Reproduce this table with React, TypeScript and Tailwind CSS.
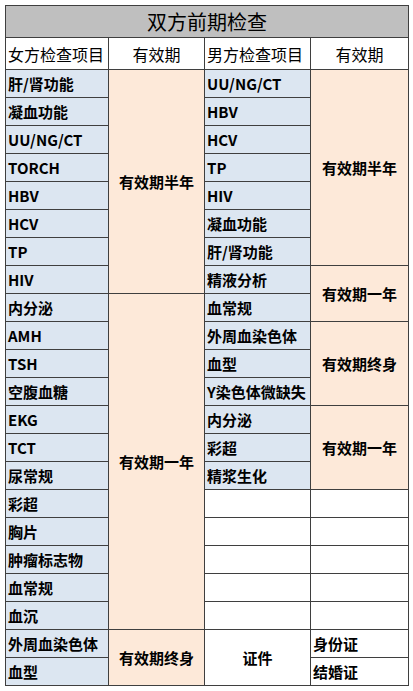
import React from 'react';

const BLUE = 'bg-[#dce6f1]';
const PEACH = 'bg-[#fde9d9]';

type Cell = { text?: string; span?: number; tone: 'blue' | 'peach' | 'white'; center?: boolean };

// 22 data rows: [女方项目, 女方有效期?, 男方项目?, 男方有效期?]
const rows: (Cell | null)[][] = [
    [{ text: '肝/肾功能', tone: 'blue' }, { text: '有效期半年', span: 8, tone: 'peach', center: true }, { text: 'UU/NG/CT', tone: 'blue' }, { text: '有效期半年', span: 7, tone: 'peach', center: true }],
    [{ text: '凝血功能', tone: 'blue' }, null, { text: 'HBV', tone: 'blue' }, null],
    [{ text: 'UU/NG/CT', tone: 'blue' }, null, { text: 'HCV', tone: 'blue' }, null],
    [{ text: 'TORCH', tone: 'blue' }, null, { text: 'TP', tone: 'blue' }, null],
    [{ text: 'HBV', tone: 'blue' }, null, { text: 'HIV', tone: 'blue' }, null],
    [{ text: 'HCV', tone: 'blue' }, null, { text: '凝血功能', tone: 'blue' }, null],
    [{ text: 'TP', tone: 'blue' }, null, { text: '肝/肾功能', tone: 'blue' }, null],
    [{ text: 'HIV', tone: 'blue' }, null, { text: '精液分析', tone: 'blue' }, { text: '有效期一年', span: 2, tone: 'peach', center: true }],
    [{ text: '内分泌', tone: 'blue' }, { text: '有效期一年', span: 12, tone: 'peach', center: true }, { text: '血常规', tone: 'blue' }, null],
    [{ text: 'AMH', tone: 'blue' }, null, { text: '外周血染色体', tone: 'blue' }, { text: '有效期终身', span: 3, tone: 'peach', center: true }],
    [{ text: 'TSH', tone: 'blue' }, null, { text: '血型', tone: 'blue' }, null],
    [{ text: '空腹血糖', tone: 'blue' }, null, { text: 'Y染色体微缺失', tone: 'blue' }, null],
    [{ text: 'EKG', tone: 'blue' }, null, { text: '内分泌', tone: 'blue' }, { text: '有效期一年', span: 3, tone: 'peach', center: true }],
    [{ text: 'TCT', tone: 'blue' }, null, { text: '彩超', tone: 'blue' }, null],
    [{ text: '尿常规', tone: 'blue' }, null, { text: '精浆生化', tone: 'blue' }, null],
    [{ text: '彩超', tone: 'blue' }, null, { tone: 'white' }, { tone: 'white' }],
    [{ text: '胸片', tone: 'blue' }, null, { tone: 'white' }, { tone: 'white' }],
    [{ text: '肿瘤标志物', tone: 'blue' }, null, { tone: 'white' }, { tone: 'white' }],
    [{ text: '血常规', tone: 'blue' }, null, { tone: 'white' }, { tone: 'white' }],
    [{ text: '血沉', tone: 'blue' }, null, { tone: 'white' }, { tone: 'white' }],
    [{ text: '外周血染色体', tone: 'blue' }, { text: '有效期终身', span: 2, tone: 'peach', center: true }, { text: '证件', span: 2, tone: 'white', center: true }, { text: '身份证', tone: 'white' }],
    [{ text: '血型', tone: 'blue' }, null, null, { text: '结婚证', tone: 'white' }],
];

const toneClass = (t: Cell['tone']) => (t === 'blue' ? BLUE : t === 'peach' ? PEACH : 'bg-white');

export default function App() {
    return (
        <div
            className="min-h-screen bg-white pt-[5px] pl-[5px] text-black"
            style={{ fontFamily: '"Noto Sans CJK SC", "Noto Sans", sans-serif' }}
        >
            <table className="w-[403px] table-fixed border-collapse border border-[#3f3f3f]">
                <colgroup>
                    <col className="w-[103px]" />
                    <col className="w-[96px]" />
                    <col className="w-[106px]" />
                    <col className="w-[98px]" />
                </colgroup>
                <thead>
                    <tr className="h-[32px]">
                        <th colSpan={4} className="border border-[#3f3f3f] bg-[#bfbfbf] p-0 text-center text-[20px] font-normal leading-none">
                            双方前期检查
                        </th>
                    </tr>
                    <tr className="h-[32px] text-[16px] leading-none">
                        <th className="border border-[#3f3f3f] bg-white p-0 pl-[2px] text-left font-normal whitespace-nowrap">女方检查项目</th>
                        <th className="border border-[#3f3f3f] bg-white p-0 text-center font-normal">有效期</th>
                        <th className="border border-[#3f3f3f] bg-white p-0 pl-[2px] text-left font-normal whitespace-nowrap">男方检查项目</th>
                        <th className="border border-[#3f3f3f] bg-white p-0 text-center font-normal">有效期</th>
                    </tr>
                </thead>
                <tbody className="text-[15px] font-bold leading-none">
                    {rows.map((r, i) => (
                        <tr key={i} className="h-[28px]">
                            {r.map((c, j) =>
                                c ? (
                                    <td
                                        key={j}
                                        rowSpan={c.span}
                                        className={`border border-[#3f3f3f] p-0 whitespace-nowrap ${toneClass(c.tone)} ${c.center ? 'text-center' : 'pl-[2px] text-left'}`}
                                    >
                                        {c.text}
                                    </td>
                                ) : null
                            )}
                        </tr>
                    ))}
                </tbody>
            </table>
        </div>
    );
}
